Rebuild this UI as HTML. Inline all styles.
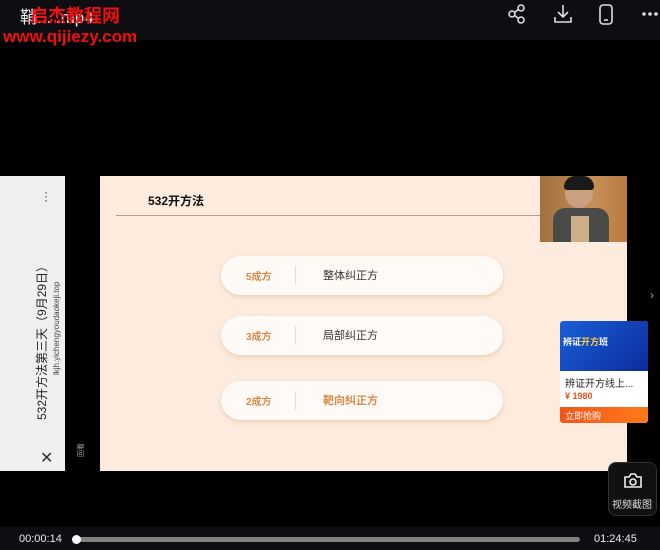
<!DOCTYPE html>
<html><head><meta charset="utf-8"><style>
*{margin:0;padding:0;box-sizing:border-box}
body{width:660px;height:550px;background:#000;position:relative;overflow:hidden;font-family:"Liberation Sans","Noto Sans CJK SC",sans-serif}
.a{position:absolute}
.pill{position:absolute;left:221px;width:282px;height:39px;border-radius:20px;background:#fffaf6;box-shadow:0 2px 4px rgba(220,170,130,.45)}
.pill .n{position:absolute;left:25px;top:12px;font-size:10px;font-weight:bold;color:#d98a4a}
.pill .s{position:absolute;left:74px;top:10px;width:1px;height:19px;background:#ecdccf}
.pill .t{position:absolute;left:102px;top:11px;font-size:11px;color:#333}
</style></head><body>
<div class="a" style="left:0;top:0;width:660px;height:40px;background:#0d0d12"></div>
<div class="a" style="left:20px;top:3px;color:#eee;font-size:17px">鞘... .mp4</div>
<div class="a" style="left:30px;top:2px;color:#f01010;font-size:18px;font-weight:bold">启杰教程网</div>
<div class="a" style="left:3px;top:27px;color:#f01010;font-size:17px;font-weight:bold">www.qijiezy.com</div>
<svg class="a" style="left:505px;top:2px" width="155" height="24" fill="none" stroke="#ddd" stroke-width="1.6">
<circle cx="7" cy="12" r="3"/><circle cx="16" cy="6" r="3"/><circle cx="16" cy="18" r="3"/><path d="M9.5 10.5l4-3M9.5 13.5l4 3"/>
<path d="M58 3v12M53 10l5 5 5-5M50 15v5h16v-5"/>
<rect x="95" y="3" width="12" height="19" rx="3"/><path d="M99 18h4"/>
<circle cx="139" cy="12" r="1" fill="#ddd"/><circle cx="145" cy="12" r="1" fill="#ddd"/><circle cx="151" cy="12" r="1" fill="#ddd"/>
</svg>
<div class="a" style="left:0;top:176px;width:65px;height:295px;background:#efefef"></div>
<div class="a" style="left:44px;top:190px;color:#333;font-size:12px;line-height:4px">·<br>·<br>·</div>
<div class="a" style="left:33px;top:420px;transform:rotate(-90deg);transform-origin:0 0;white-space:nowrap;font-size:12px;color:#222">532开方法第三天（9月29日）</div>
<div class="a" style="left:52px;top:375px;transform:rotate(-90deg);transform-origin:0 0;white-space:nowrap;font-size:8px;color:#444">lkjh.yichengyoudaokeji.top</div>
<div class="a" style="left:40px;top:448px;font-size:16px;color:#333">✕</div>
<div class="a" style="left:74px;top:445px;font-size:7px;color:#aaa;transform:rotate(-90deg)">回看</div>
<div class="a" style="left:100px;top:176px;width:527px;height:295px;background:#fdebde"></div>
<div class="a" style="left:148px;top:192px;font-size:12px;font-weight:bold;color:#111">532开方法</div>
<div class="a" style="left:116px;top:215px;width:424px;height:1px;background:#b59b88"></div>
<div class="a" style="left:540px;top:176px;width:87px;height:66px;background:linear-gradient(90deg,#a07040,#c59058 60%,#b87a40);overflow:hidden">
<div class="a" style="left:25px;top:2px;width:28px;height:30px;border-radius:50%;background:#c9a080"></div>
<div class="a" style="left:24px;top:0;width:30px;height:14px;border-radius:14px 14px 4px 4px;background:#1a1a1a"></div>
<div class="a" style="left:13px;top:32px;width:56px;height:34px;border-radius:12px 12px 0 0;background:#4a4a48"></div>
<div class="a" style="left:31px;top:40px;width:18px;height:26px;background:#cdb08a"></div></div>
<div class="pill" style="top:256px"><span class="n">5成方</span><span class="s"></span><span class="t">整体纠正方</span></div>
<div class="pill" style="top:316px"><span class="n">3成方</span><span class="s"></span><span class="t">局部纠正方</span></div>
<div class="pill" style="top:381px"><span class="n">2成方</span><span class="s"></span><span class="t" style="color:#d98a4a;font-weight:bold">靶向纠正方</span></div>
<div class="a" style="left:560px;top:321px;width:88px;height:102px;background:#fff;border-radius:3px;overflow:hidden">
<div class="a" style="left:0;top:0;width:88px;height:50px;background:linear-gradient(135deg,#1a5fd8,#0c2c9c)"></div>
<div class="a" style="left:3px;top:14px;font-size:9px;font-weight:bold;color:#fff">辨证<span style="color:#ffd23a">开方</span>班</div>
<div class="a" style="left:5px;top:54px;font-size:10px;color:#222">辨证开方线上...</div>
<div class="a" style="left:5px;top:70px;font-size:9px;color:#e8531c;font-weight:bold">¥ 1980</div>
<div class="a" style="left:0;top:86px;width:88px;height:16px;background:linear-gradient(90deg,#f2551c,#ff7a1a);color:#fff;font-size:9px;padding:2px 5px">立即抢购</div></div>
<div class="a" style="left:650px;top:288px;color:#aaa;font-size:12px">›</div>
<div class="a" style="left:608px;top:462px;width:49px;height:54px;border-radius:8px;background:#111;border:1px solid #333">
<svg class="a" style="left:14px;top:9px" width="20" height="17" fill="none" stroke="#eee" stroke-width="1.6"><path d="M2 5h4l2-3h4l2 3h4v10H2z"/><circle cx="10" cy="10" r="3"/></svg>
<div class="a" style="left:3px;top:33px;font-size:10px;color:#ddd">视频截图</div></div>
<div class="a" style="left:0;top:527px;width:660px;height:23px;background:#0d0d12"></div>
<div class="a" style="left:19px;top:533px;font-size:11px;color:#eee">00:00:14</div>
<div class="a" style="left:74px;top:537px;width:506px;height:5px;border-radius:3px;background:#808080"></div>
<div class="a" style="left:72px;top:535px;width:9px;height:9px;border-radius:50%;background:#fff"></div>
<div class="a" style="left:594px;top:533px;font-size:11px;color:#eee">01:24:45</div>
</body></html>
